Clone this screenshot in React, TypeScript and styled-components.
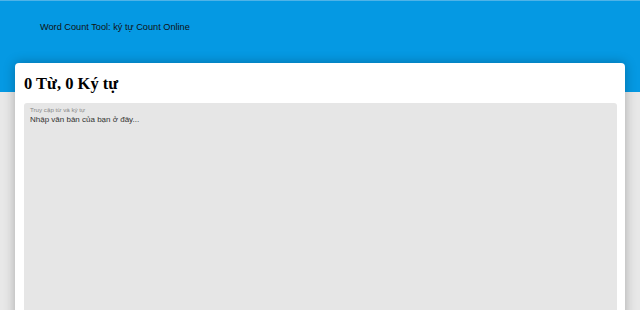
import React from "react";
import styled, { createGlobalStyle } from "styled-components";

const Global = createGlobalStyle`
  html, body { margin: 0; padding: 0; }
  body {
    background: #e8e8e8;
    font-family: "Liberation Sans", Arial, sans-serif;
    overflow: hidden;
  }
`;

const Header = styled.header`
  height: 92px;
  background: #0599e3;
  border-top: 1px solid #4fb3e8;
  box-sizing: border-box;
  padding: 19px 0 0 40px;
`;

const HeaderTitle = styled.div`
  font-size: 9.2px;
  color: #111;
  line-height: 14px;
`;

const Main = styled.main`
  padding: 0 15px;
  margin-top: -29px;
`;

const Card = styled.section`
  background: #fff;
  border-radius: 4px;
  box-shadow: 0 0 12px rgba(0, 0, 0, 0.28);
  padding: 10px 8px 0 9px;
  height: 260px;
  box-sizing: border-box;
`;

const Title = styled.h1`
  margin: 0 0 8px 0;
  font-family: "Liberation Serif", "Times New Roman", serif;
  font-size: 16.5px;
  font-weight: bold;
  line-height: 22px;
  color: #000;
`;

const Field = styled.div`
  background: #e6e6e6;
  border-radius: 3px;
  height: 220px;
  padding: 2px 6px;
  box-sizing: border-box;
  display: flex;
  flex-direction: column;
`;

const Label = styled.label`
  font-size: 6.2px;
  color: #888;
  line-height: 9px;
`;

const Area = styled.textarea`
  flex: 1;
  border: none;
  background: transparent;
  resize: none;
  outline: none;
  padding: 0;
  margin: 0;
  font-family: "Liberation Sans", Arial, sans-serif;
  font-size: 8px;
  line-height: 12px;
  color: #333;
  &::placeholder { color: #333; }
`;

export default function App() {
  return (
    <>
      <Global />
      <Header>
        <HeaderTitle>Word Count Tool: ký tự Count Online</HeaderTitle>
      </Header>
      <Main>
        <Card>
          <Title>0 Từ, 0 Ký tự</Title>
          <Field>
            <Label>Truy cập từ và ký tự</Label>
            <Area placeholder="Nhập văn bản của bạn ở đây..." />
          </Field>
        </Card>
      </Main>
    </>
  );
}
